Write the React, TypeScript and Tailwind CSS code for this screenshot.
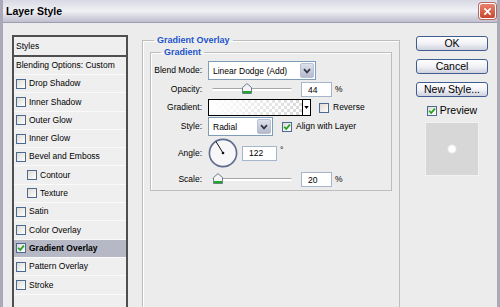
import type { FC, ReactNode } from 'react';

const Check: FC<{ checked?: boolean }> = ({ checked }) => (
  <span className="flex h-[10px] w-[10px] shrink-0 items-center justify-center border border-[#4b6a93] bg-gradient-to-br from-[#dedbd2] to-white">
    {checked && (
      <svg viewBox="0 0 8 8" className="h-[8px] w-[8px]">
        <path d="M1.2 3.8 L3.2 6 L6.9 1.6" stroke="#1fa01f" strokeWidth="1.7" fill="none" />
      </svg>
    )}
  </span>
);

const Chevron = () => (
  <svg viewBox="0 0 8 6" className="h-[6px] w-[8px]">
    <path d="M1 1.2 L4 4.4 L7 1.2" stroke="#303848" strokeWidth="1.7" fill="none" />
  </svg>
);

const Select: FC<{ value: string; width: string }> = ({ value, width }) => (
  <div className={`flex h-[19px] items-stretch border border-[#7f9db9] bg-white ${width}`}>
    <span className="flex flex-1 items-center pl-[4px] pt-[2px]">{value}</span>
    <span className="m-[1px] flex w-[14px] items-center justify-center rounded-[2px] border border-[#b6bfd6] bg-gradient-to-b from-[#dfe2ec] to-[#b4b9cc]">
      <Chevron />
    </span>
  </div>
);

const NumBox: FC<{ value: string; width: string }> = ({ value, width }) => (
  <span className={`flex h-[15px] items-center border border-[#a4b5cc] bg-white pl-[6px] pt-[1px] ${width}`}>{value}</span>
);

const Slider: FC<{ pos: number }> = ({ pos }) => (
  <div className="relative h-[15px] w-[89px]">
    <div className="absolute left-[4px] top-[6px] h-[3px] w-[80px] rounded-full border-t border-[#a6a6a6] bg-white" />
    <svg viewBox="0 0 10 11" className="absolute top-[1px] h-[11px] w-[10px]" style={{ left: pos }}>
      <path d="M0.5 4.5 L5 0.6 L9.5 4.5 V10.5 H0.5 Z" fill="#f4f4f4" stroke="#5e7187" strokeWidth="0.9" />
      <rect x="1" y="8" width="8" height="2.2" fill="#22a52a" />
    </svg>
  </div>
);

const Row: FC<{ label: string; className?: string; children: ReactNode }> = ({ label, className = '', children }) => (
  <div className={`flex items-center ${className}`}>
    <span className="w-[53px] shrink-0 pr-[2px] text-right">{label}</span>
    <div className="ml-[4px] flex items-center">{children}</div>
  </div>
);

const styleRows = [
  { label: 'Drop Shadow' },
  { label: 'Inner Shadow' },
  { label: 'Outer Glow' },
  { label: 'Inner Glow' },
  { label: 'Bevel and Emboss' },
  { label: 'Contour', indent: true },
  { label: 'Texture', indent: true },
  { label: 'Satin' },
  { label: 'Color Overlay' },
  { label: 'Gradient Overlay', checked: true },
  { label: 'Pattern Overlay' },
  { label: 'Stroke' },
];

const Button: FC<{ children: ReactNode }> = ({ children }) => (
  <button className="flex h-[15px] w-[72px] items-center justify-center rounded-[3px] border border-[#405d8f] bg-gradient-to-b from-white via-[#f2f2f6] to-[#cfd2de] text-[10.5px] leading-none text-black">
    {children}
  </button>
);

export default function App() {
  return (
    <div className="flex h-[307px] w-[500px] flex-col overflow-hidden border-x-[3px] border-[#a9a9ba] bg-[#ececec] font-['Liberation_Sans',Arial,sans-serif] text-[8.5px] text-black">
      <div className="-mx-[3px] flex h-[23px] shrink-0 items-center justify-between border-b border-[#9d9db0] bg-gradient-to-b from-[#d9d9e4] via-[#f0f0f5] to-[#bfbfcf] pl-[6px] pr-[4px]">
        <span className="pt-[1px] text-[10.5px] font-bold">Layer Style</span>
        <span className="flex h-[16px] w-[17px] items-center justify-center rounded-[3px] border border-white bg-gradient-to-b from-[#e8836c] to-[#c7452e] shadow-[0_0_0_1px_#b86a60]">
          <svg viewBox="0 0 10 10" className="h-[9px] w-[9px]">
            <path d="M1.5 1.5 L8.5 8.5 M8.5 1.5 L1.5 8.5" stroke="white" strokeWidth="1.8" />
          </svg>
        </span>
      </div>

      <div className="flex flex-1 items-start">
        {/* styles list */}
        <div className="ml-[9px] mt-[12px] flex h-[290px] w-[116px] shrink-0 flex-col border-2 border-[#4f4f4f] bg-[#efefef]">
          <div className="flex h-[18px] items-center px-[2px]">Styles</div>
          <div className="h-[2px] bg-[#4f4f4f]" />
          <div className="flex h-[18px] items-center border-b border-[#fafafa] px-[2px]">Blending Options: Custom</div>
          {styleRows.map((r) => (
            <div
              key={r.label}
              className={`flex h-[18.3px] items-center gap-[3px] border-b border-[#fafafa] ${r.indent ? 'pl-[13px]' : 'pl-[2px]'} ${r.checked ? 'bg-[#b6b9c5] font-bold' : ''}`}
            >
              <Check checked={r.checked} />
              <span>{r.label}</span>
            </div>
          ))}
        </div>

        {/* settings */}
        <fieldset className="ml-[14px] mt-[12px] h-[300px] w-[258px] shrink-0 border border-[#bdbdbd] shadow-[inset_1px_1px_0_#fff]">
          <legend className="ml-[11px] px-[3px] text-[9px] font-bold leading-[11px] text-[#2152c9]">Gradient Overlay</legend>
          <fieldset className="ml-[7px] mt-[1px] w-[242px] border border-[#bdbdbd] pb-[3px] shadow-[inset_1px_1px_0_#fff]">
            <legend className="ml-[10px] px-[3px] text-[9px] font-bold leading-[11px] text-[#2152c9]">Gradient</legend>
            <div className="flex flex-col pt-[3px]">
              <Row label="Blend Mode:" className="h-[19px]">
                <Select value="Linear Dodge (Add)" width="w-[108px]" />
              </Row>
              <Row label="Opacity:" className="mt-[2px] h-[15px]">
                <Slider pos={34} />
                <NumBox value="44" width="ml-[4px] w-[31px]" />
                <span className="ml-[3px]">%</span>
              </Row>
              <Row label="Gradient:" className="mt-[2px] h-[17px]">
                <div className="flex h-[17px] w-[103px] border border-black">
                  <div className="flex-1 [background:linear-gradient(to_right,#fff,rgba(255,255,255,0)),repeating-conic-gradient(#d9d9d9_0_25%,#fff_0_50%)_0_0/6px_6px]" />
                  <div className="flex w-[8px] items-center justify-center border-l border-black bg-white">
                    <svg viewBox="0 0 6 4" className="h-[3px] w-[5px]">
                      <path d="M0 0 H6 L3 4 Z" fill="black" />
                    </svg>
                  </div>
                </div>
                <span className="ml-[8px]">
                  <Check />
                </span>
                <span className="ml-[4px]">Reverse</span>
              </Row>
              <Row label="Style:" className="mt-[1px] h-[19px]">
                <Select value="Radial" width="w-[65px]" />
                <span className="ml-[9px]">
                  <Check checked />
                </span>
                <span className="ml-[4px]">Align with Layer</span>
              </Row>
              <Row label="Angle:" className="mt-[2px] h-[30px]">
                <svg viewBox="0 0 30 30" className="h-[30px] w-[30px]">
                  <circle cx="15" cy="15" r="13.6" fill="#f7f7f9" stroke="#5d6b8e" strokeWidth="1.6" />
                  <path d="M15 15 L8 3.6" stroke="#111" strokeWidth="1" />
                  <circle cx="15" cy="15" r="1.3" fill="#111" />
                </svg>
                <NumBox value="122" width="ml-[4px] w-[35px]" />
                <span className="ml-[3px] self-start pt-[6px]">°</span>
              </Row>
              <Row label="Scale:" className="mt-[4px] h-[15px]">
                <Slider pos={5} />
                <NumBox value="20" width="ml-[4px] w-[31px]" />
                <span className="ml-[3px]">%</span>
              </Row>
            </div>
          </fieldset>
        </fieldset>

        {/* buttons */}
        <div className="ml-[16px] mt-[13px] flex w-[72px] shrink-0 flex-col items-center">
          <Button>OK</Button>
          <div className="mt-[8px]">
            <Button>Cancel</Button>
          </div>
          <div className="mt-[8px]">
            <Button>New Style...</Button>
          </div>
          <div className="mt-[8px] flex h-[11px] items-center gap-[3px] text-[10.5px]">
            <Check checked />
            <span>Preview</span>
          </div>
          <div className="mt-[6px] h-[54px] w-[54px] border border-[#f2f2f2] bg-[radial-gradient(circle,#fff_0,#fff_3px,#d7d7d7_5px)]" />
        </div>
      </div>
    </div>
  );
}
